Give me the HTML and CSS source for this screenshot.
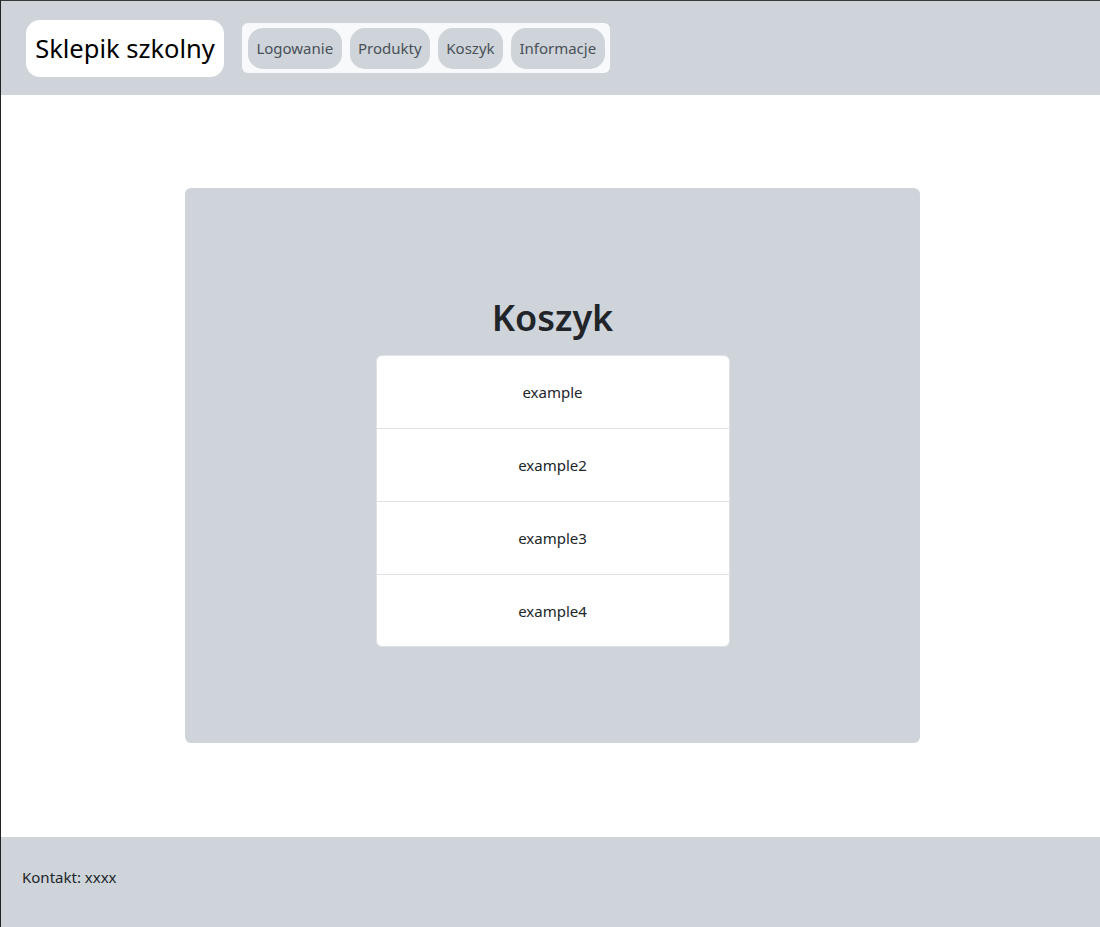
FILE: index.html
```html
<!DOCTYPE html>
<html lang="pl">
<head>
<meta charset="utf-8">
<title>Sklepik szkolny</title>
<link rel="stylesheet" href="styles.css">
</head>
<body>
<div class="page">
  <header class="topbar">
    <div class="brand">Sklepik szkolny</div>
    <nav class="nav">
      <a class="nav-link" href="#">Logowanie</a>
      <a class="nav-link" href="#">Produkty</a>
      <a class="nav-link" href="#">Koszyk</a>
      <a class="nav-link" href="#">Informacje</a>
    </nav>
  </header>
  <main class="main">
    <section class="card">
      <h1 class="title">Koszyk</h1>
      <ul class="list">
        <li class="item">example</li>
        <li class="item">example2</li>
        <li class="item">example3</li>
        <li class="item">example4</li>
      </ul>
    </section>
  </main>
  <footer class="footer">Kontakt: xxxx</footer>
</div>
</body>
</html>
```
FILE: styles.css
```css
html, body {
  margin: 0;
  padding: 0;
  background: #fff;
}
body {
  font-family: "Noto Sans", "Open Sans", sans-serif;
  font-size: 16px;
  color: #212529;
}
.page {
  height: 927px;
  box-sizing: border-box;
  border-top: 1px solid #3a3a3a;
  border-left: 1px solid #222;
  display: flex;
  flex-direction: column;
}
.topbar {
  height: 94px;
  background: #ced4da;
  display: flex;
  align-items: center;
  padding-left: 25px;
  gap: 18px;
}
.brand {
  background: #fff;
  border-radius: 14px;
  height: 57px;
  width: 198px;
  box-sizing: border-box;
  display: flex;
  align-items: center;
  justify-content: center;
  font-size: 25.5px;
  color: #000;
}
.nav {
  background: #f8f9fa;
  border-radius: 6px;
  height: 50px;
  box-sizing: border-box;
  padding: 5px 5px 5px 6px;
  display: flex;
  gap: 8px;
  align-items: center;
}
.nav-link {
  background: #ced4da;
  border-radius: 15px;
  height: 41px;
  padding: 0 8.4px;
  display: flex;
  align-items: center;
  color: #495057;
  text-decoration: none;
  font-size: 15px;
}
.main {
  flex: 1;
  display: flex;
  justify-content: center;
  align-items: flex-start;
  padding-top: 93px;
  padding-left: 4px;
}
.card {
  width: 735px;
  height: 555px;
  box-sizing: border-box;
  background: #ced4da;
  border-radius: 6px;
  padding-top: 106px;
  display: flex;
  flex-direction: column;
  align-items: center;
}
.title {
  margin: 0 0 13px;
  font-size: 36px;
  font-weight: 600;
  line-height: 48px;
  color: #212529;
}
.list {
  list-style: none;
  margin: 0;
  padding: 0;
  width: 354px;
  background: #fff;
  border: 1px solid #dee2e6;
  border-radius: 6px;
  box-sizing: border-box;
}
.item {
  height: 73px;
  box-sizing: border-box;
  display: flex;
  align-items: center;
  justify-content: center;
  border-top: 1px solid #dee2e6;
  font-size: 15px;
}
.item:first-child {
  border-top: none;
  height: 72px;
}
.list .item:last-child {
  height: 72px;
}
.footer {
  height: 90px;
  box-sizing: border-box;
  background: #ced4da;
  display: flex;
  align-items: center;
  padding-left: 21px;
  padding-bottom: 10px;
  font-size: 15px;
}
```
